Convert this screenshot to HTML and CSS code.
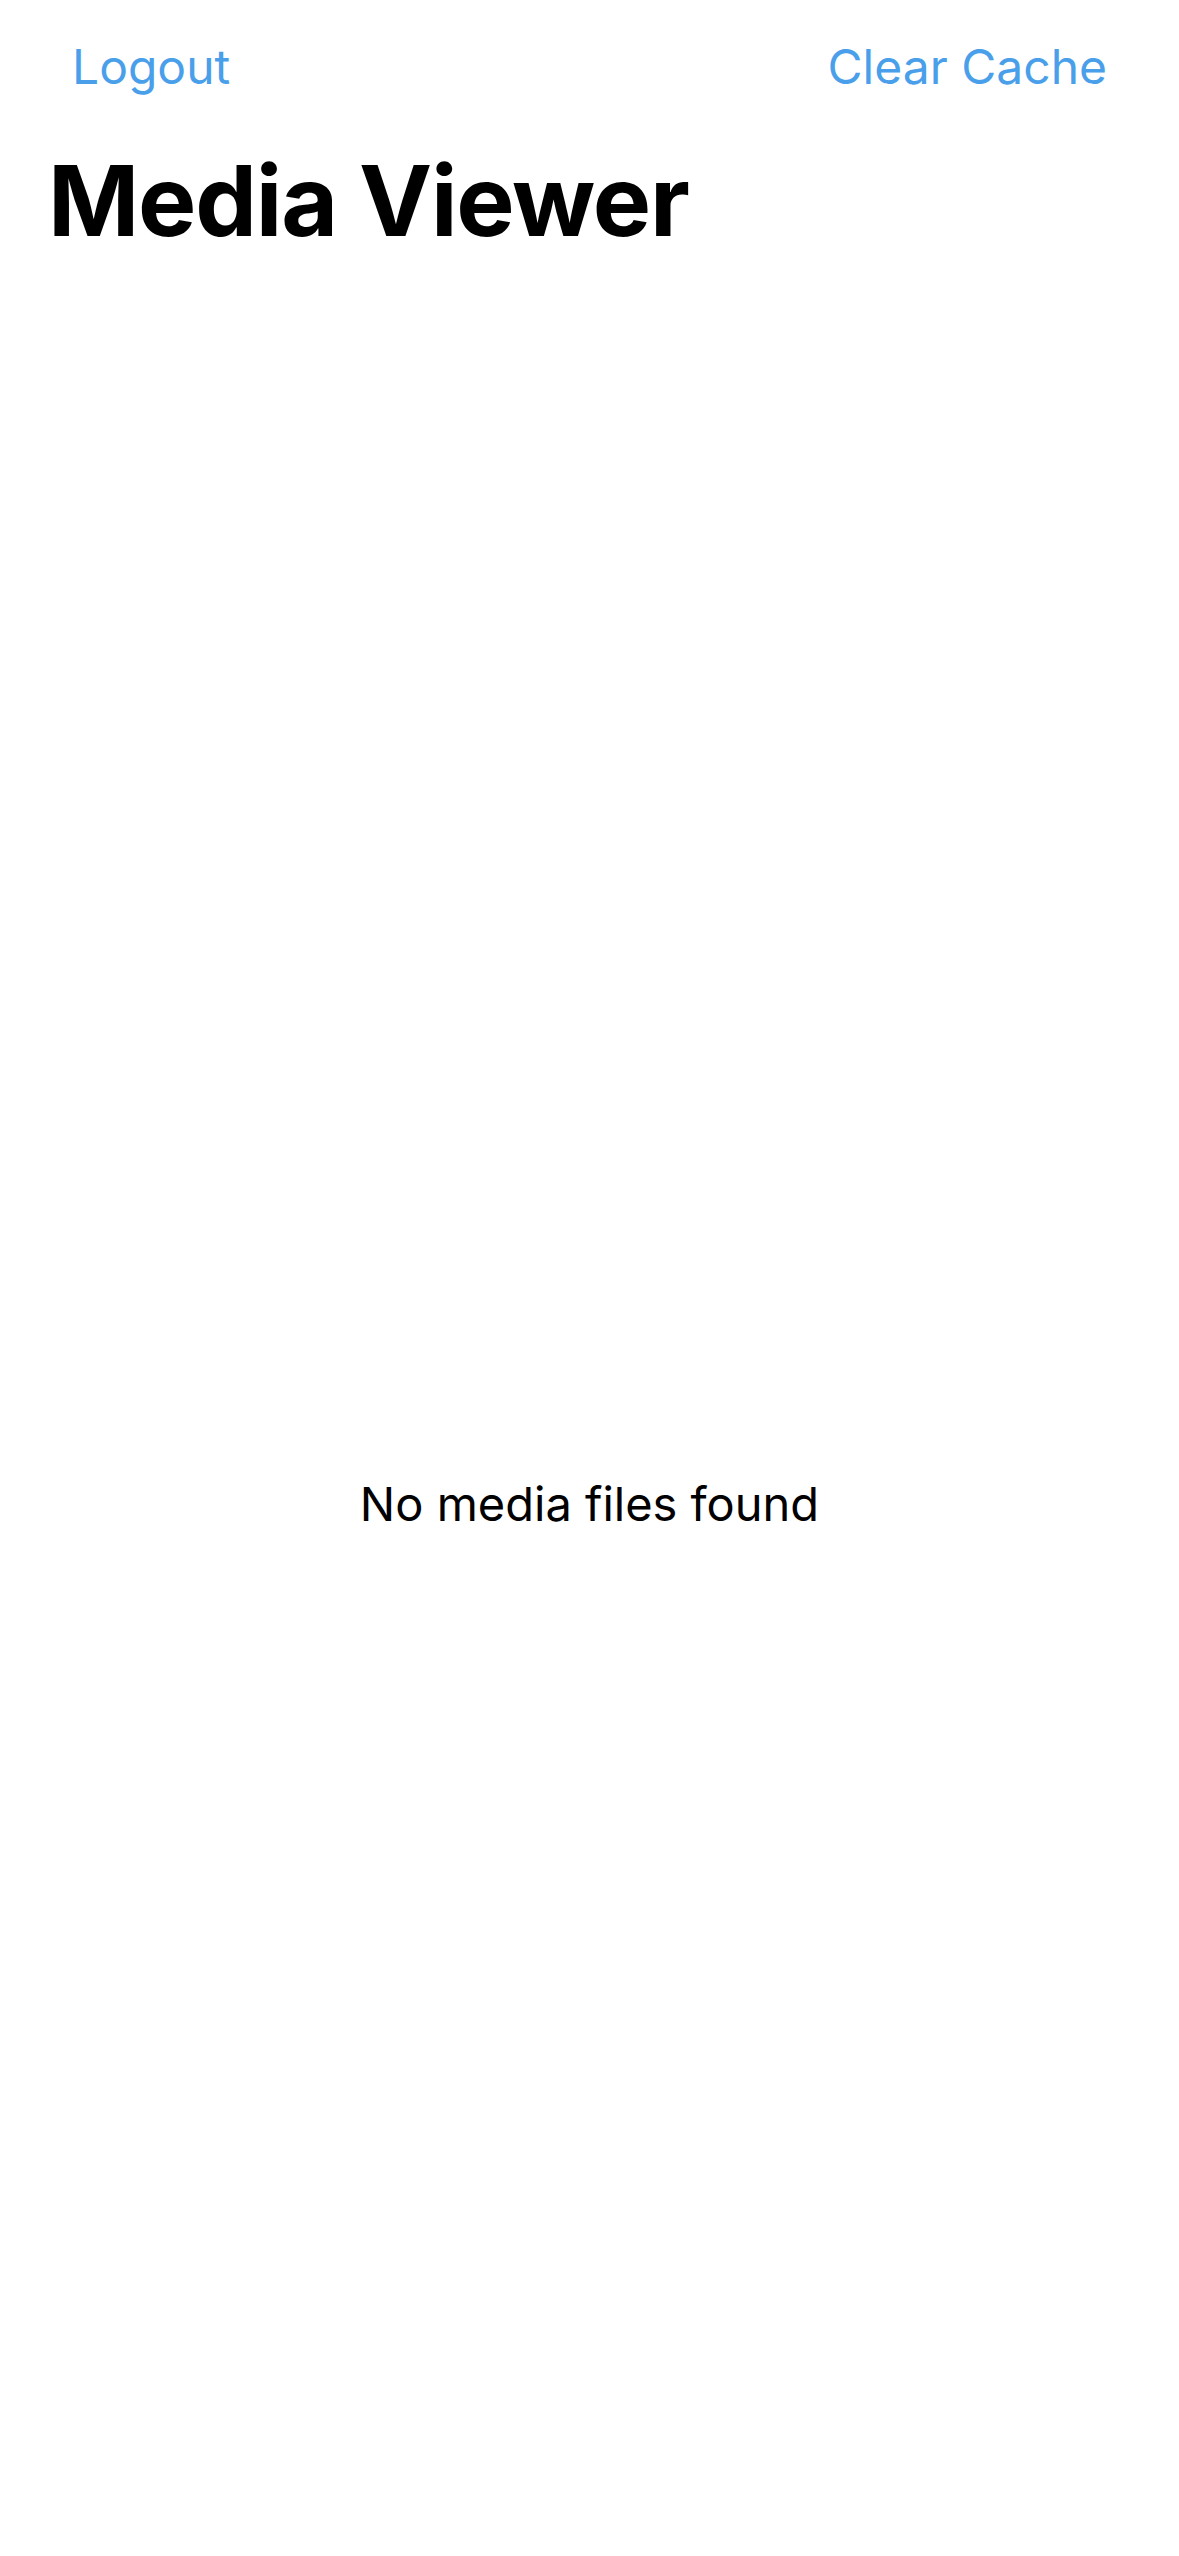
FILE: index.html
```html
<!DOCTYPE html>
<html lang="en">
<head>
<meta charset="utf-8">
<title>Media Viewer</title>
<link rel="stylesheet" href="styles.css">
</head>
<body>
<div class="screen">
  <header class="topbar">
    <a class="nav-btn" href="#">Logout</a>
    <a class="nav-btn" href="#">Clear Cache</a>
  </header>
  <h1 class="title">Media Viewer</h1>
  <main class="content">
    <p class="empty">No media files found</p>
  </main>
</div>
</body>
</html>
```

FILE: styles.css
```css
* { box-sizing: border-box; }
html, body {
  margin: 0;
  padding: 0;
  background: #ffffff;
}
body {
  font-family: Inter, "Noto Sans", "Liberation Sans", sans-serif;
  color: #000;
}
.screen {
  width: 1179px;
  height: 2556px;
  display: flex;
  flex-direction: column;
}
.topbar {
  display: flex;
  justify-content: space-between;
  align-items: center;
  padding: 30px 72px 0 72px;
  height: 102px;
}
.nav-btn {
  color: #4a9fea;
  text-decoration: none;
  font-size: 48px;
  font-weight: 400;
  letter-spacing: 0;
}
.title {
  margin: 40px 0 0 48px;
  font-size: 98px;
  font-weight: 700;
  letter-spacing: -1.2px;
  line-height: 118px;
}
.content {
  flex: 1;
  display: flex;
  align-items: center;
  justify-content: center;
  padding-top: 190px;
}
.empty {
  margin: 0;
  font-size: 47px;
  font-weight: 400;
  letter-spacing: 0;
}
```
